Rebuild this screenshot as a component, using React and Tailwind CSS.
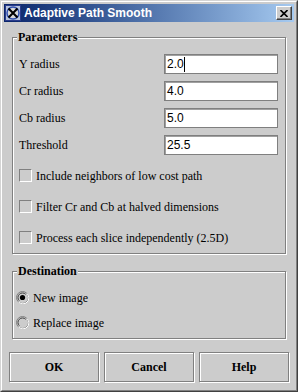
import React from 'react';

const serif = "font-['Liberation_Serif',serif]";

function TitleIcon() {
  return (
    <svg width="16" height="16" viewBox="0 0 16 16" className="shrink-0">
      <rect x="0.5" y="0.5" width="15" height="15" fill="#b8c4dc" stroke="#2a3c8c" />
      <circle cx="8" cy="8" r="6" fill="#d8d8d8" stroke="#3050b0" strokeWidth="1.5" />
      <path d="M3.5 3.5 L12.5 12.5 M12.5 3.5 L3.5 12.5" stroke="#000" strokeWidth="2" />
    </svg>
  );
}

function CloseButton() {
  return (
    <div className="w-[16px] h-[14px] bg-[#cccccc] border border-t-white border-l-white border-r-[#404040] border-b-[#404040] shadow-[inset_-1px_-1px_0_#808080] flex items-center justify-center">
      <svg width="8" height="7" viewBox="0 0 8 7">
        <path d="M0.5 0 L7.5 7 M7.5 0 L0.5 7" stroke="#000" strokeWidth="1.6" />
      </svg>
    </div>
  );
}

function Group({ title, className, children }) {
  return (
    <div className={`relative mx-[8px] border border-[#808080] shadow-[1px_1px_0_#fff,inset_1px_1px_0_#fff] ${className}`}>
      <span className={`absolute left-[4px] -top-[8px] px-[1px] bg-[#cccccc] text-[12px] leading-[14px] font-bold text-black ${serif}`}>
        {title}
      </span>
      {children}
    </div>
  );
}

function Field({ label, value, cursor }) {
  return (
    <div className="flex items-center justify-between h-[20px]">
      <span className={`text-[12px] leading-none text-black ${serif}`}>{label}</span>
      <div className="w-[114px] h-[20px] bg-white border border-[#7f7f7f] shadow-[inset_1px_1px_0_#a0a0a0] flex items-center pl-[2px] font-['Liberation_Sans',sans-serif] text-[12px] text-black">
        <span>{value}</span>
        {cursor && <span className="w-px h-[15px] bg-black" />}
      </div>
    </div>
  );
}

function Check({ label }) {
  return (
    <div className="flex items-center h-[13px] gap-[4px]">
      <div className="w-[13px] h-[13px] border border-t-[#808080] border-l-[#808080] border-r-white border-b-white" />
      <span className={`text-[12px] leading-none text-black ${serif}`}>{label}</span>
    </div>
  );
}

function Radio({ label, checked }) {
  return (
    <div className="flex items-center h-[13px] gap-[4px]">
      <svg width="13" height="13" viewBox="0 0 13 13" className="shrink-0">
        <circle cx="6.5" cy="6.5" r="6" fill="none" stroke="#808080" />
        <path d="M11.1 2.6 A6 6 0 0 1 2.6 11.1" fill="none" stroke="#fff" />
        <path d="M9.7 3.3 A4.5 4.5 0 0 0 3.3 9.7" fill="none" stroke="#404040" />
        {checked && <circle cx="6.5" cy="6.5" r="2.6" fill="#000" />}
      </svg>
      <span className={`text-[12px] leading-none text-black ${serif}`}>{label}</span>
    </div>
  );
}

function Button({ children }) {
  return (
    <div className={`w-[90px] h-[30px] border border-[#808080] shadow-[inset_1px_1px_0_#fff,1px_1px_0_#fff] flex items-center justify-center text-[12px] font-bold text-black ${serif}`}>
      {children}
    </div>
  );
}

export default function App() {
  return (
    <div className="w-[298px] h-[392px] bg-[#cccccc] border border-t-[#d4d4d4] border-l-[#d4d4d4] border-r-[#404040] border-b-[#404040]">
      <div className="h-full border border-t-white border-l-white border-r-[#808080] border-b-[#808080] p-[2px] flex flex-col">
        <div className="h-[18px] flex items-center pl-[1px] pr-[2px] bg-gradient-to-r from-[#0a246a] to-[#a6caf0]">
          <TitleIcon />
          <span className="ml-[3px] text-white text-[12px] font-bold font-['Liberation_Sans',sans-serif]">
            Adaptive Path Smooth
          </span>
          <div className="ml-auto">
            <CloseButton />
          </div>
        </div>

        <Group title="Parameters" className="mt-[15px] pt-[16px] pl-[6px] pr-[7px] pb-[9px]">
          <div className="flex flex-col gap-[7px]">
            <Field label="Y radius" value="2.0" cursor />
            <Field label="Cr radius" value="4.0" />
            <Field label="Cb radius" value="5.0" />
            <Field label="Threshold" value="25.5" />
          </div>
          <div className="mt-[14px] flex flex-col gap-[18px]">
            <Check label="Include neighbors of low cost path" />
            <Check label="Filter Cr and Cb at halved dimensions" />
            <Check label="Process each slice independently (2.5D)" />
          </div>
        </Group>

        <Group title="Destination" className="mt-[17px] pt-[19px] pl-[3px] pb-[9px]">
          <div className="flex flex-col gap-[12px]">
            <Radio label="New image" checked />
            <Radio label="Replace image" />
          </div>
        </Group>

        <div className="mt-[13px] ml-[5px] flex gap-[5px]">
          <Button>OK</Button>
          <Button>Cancel</Button>
          <Button>Help</Button>
        </div>
      </div>
    </div>
  );
}
